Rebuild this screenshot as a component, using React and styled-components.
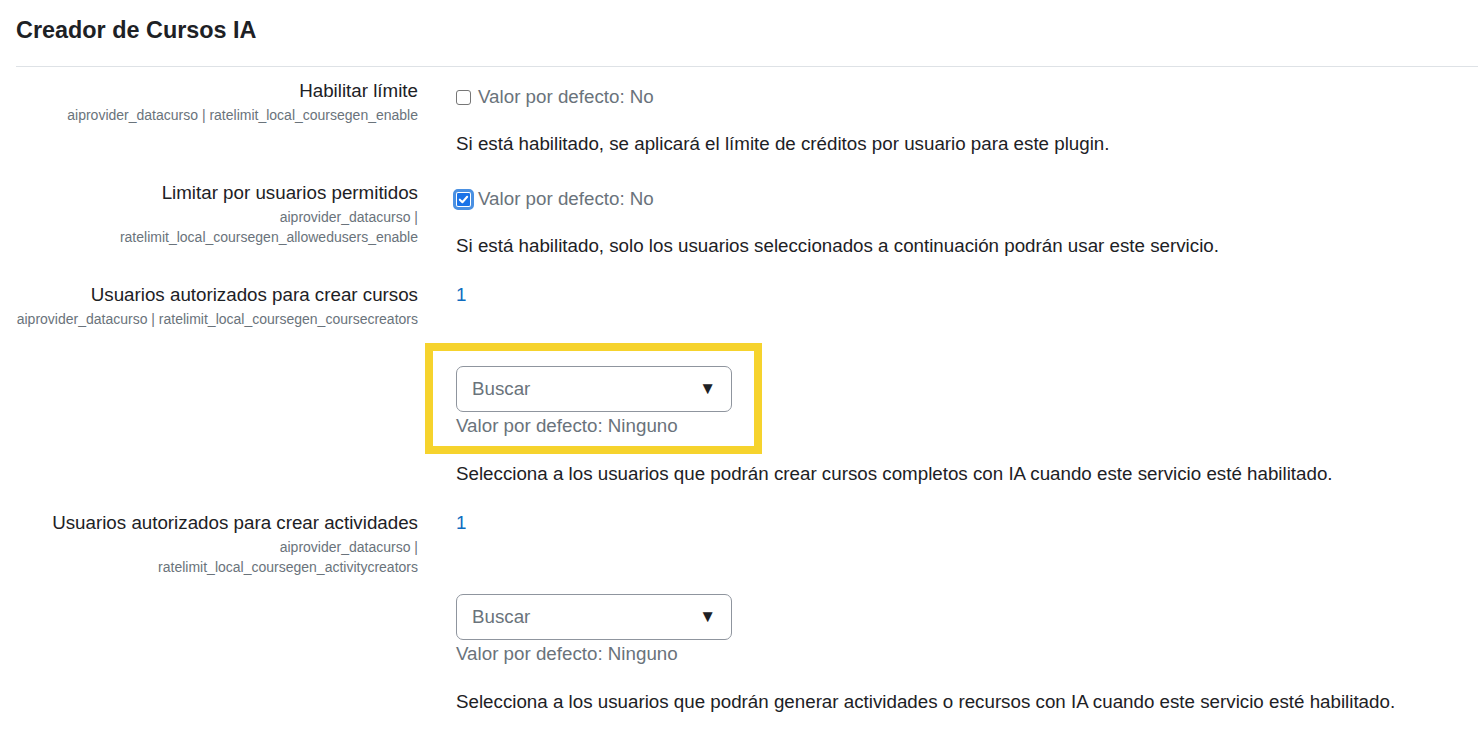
import React from 'react'
import styled, { createGlobalStyle, css } from 'styled-components'

const GlobalStyle = createGlobalStyle`
  html, body {
    margin: 0;
    padding: 0;
    background: #fff;
  }
  body {
    font-family: "Liberation Sans", Arial, sans-serif;
    color: #1d2125;
  }
`

const Page = styled.div`
  padding: 16px 0 0 16px;
`

const Title = styled.h3`
  margin: 0;
  font-size: 23.4px;
  line-height: 28px;
  font-weight: 700;
  color: #1d2125;
`

const Divider = styled.hr`
  margin: 22px 0 0 0;
  border: 0;
  border-top: 1px solid #dee2e6;
`

const Settings = styled.div`
  padding-top: 10px;
  display: flex;
  flex-direction: column;
  gap: 21px;
`

const Row = styled.div`
  display: grid;
  grid-template-columns: 402px 1fr;
  column-gap: 38px;
`

const LabelCol = styled.div`
  text-align: right;
`

const LabelTitle = styled.div`
  font-size: 18.75px;
  line-height: 28px;
  color: #1d2125;
`

const SettingName = styled.div`
  font-size: 14px;
  line-height: 20px;
  color: #6a737b;
  white-space: nowrap;
  &:first-of-type {
    margin-top: 1px;
  }
`

const ContentCol = styled.div`
  display: flex;
  flex-direction: column;
`

const CheckLine = styled.div`
  display: flex;
  align-items: center;
  padding-top: 6px;
  height: 28px;
  margin-bottom: -1px;
  font-size: 18.75px;
  color: #6a737b;
`

const Box = styled.span`
  box-sizing: border-box;
  width: 15px;
  height: 15px;
  margin-right: 7px;
  border: 1px solid #767676;
  border-radius: 3px;
  background: #fff;
  display: inline-flex;
  align-items: center;
  justify-content: center;
  ${p => p.checked && css`
    background: #1a73e8;
    border: 1px solid #fff;
    outline: 3px solid #4a90e2;
    border-radius: 2px;
  `}
`

const Description = styled.div`
  margin-top: ${p => p.gap || 20}px;
  font-size: 18.75px;
  line-height: 28px;
  color: #1d2125;
`

const Count = styled.div`
  font-size: 18.75px;
  line-height: 28px;
  color: #0f6cbf;
`

const SelectBlock = styled.div`
  position: relative;
  margin-top: 57px;
  width: 276px;
  ${p => p.highlight && css`
    &::before {
      content: '';
      position: absolute;
      left: -31px;
      top: -23px;
      width: 337px;
      height: 111px;
      box-sizing: border-box;
      border: 8px solid #f6d32d;
      pointer-events: none;
    }
  `}
`

const Select = styled.div`
  box-sizing: border-box;
  width: 276px;
  height: 46px;
  border: 1px solid #8f959e;
  border-radius: 7px;
  padding: 0 15px;
  display: flex;
  align-items: center;
  justify-content: space-between;
  font-size: 18.75px;
  color: #6a737b;
  background: #fff;
`

const Arrow = styled.span`
  font-size: 17px;
  color: #1d2125;
`

const DefaultText = styled.div`
  font-size: 18.75px;
  line-height: 28px;
  color: #6a737b;
`

function Label({ title, names }) {
  return (
    <LabelCol>
      <LabelTitle>{title}</LabelTitle>
      {names.map((n, i) => (
        <SettingName key={i}>{n}</SettingName>
      ))}
    </LabelCol>
  )
}

function Check({ checked }) {
  return (
    <Box checked={checked}>
      {checked && (
        <svg width="11" height="11" viewBox="0 0 12 12">
          <path d="M2 6.2 L4.8 9 L10 3" fill="none" stroke="#fff" strokeWidth="2.2" strokeLinecap="round" strokeLinejoin="round" />
        </svg>
      )}
    </Box>
  )
}

export default function App() {
  return (
    <>
      <GlobalStyle />
      <Page>
        <Title>Creador de Cursos IA</Title>
        <Divider />
        <Settings>
          <Row>
            <Label title="Habilitar límite" names={['aiprovider_datacurso | ratelimit_local_coursegen_enable']} />
            <ContentCol>
              <CheckLine><Check />Valor por defecto: No</CheckLine>
              <Description>Si está habilitado, se aplicará el límite de créditos por usuario para este plugin.</Description>
            </ContentCol>
          </Row>
          <Row>
            <Label title="Limitar por usuarios permitidos" names={['aiprovider_datacurso |', 'ratelimit_local_coursegen_allowedusers_enable']} />
            <ContentCol>
              <CheckLine><Check checked />Valor por defecto: No</CheckLine>
              <Description>Si está habilitado, solo los usuarios seleccionados a continuación podrán usar este servicio.</Description>
            </ContentCol>
          </Row>
          <Row>
            <Label title="Usuarios autorizados para crear cursos" names={['aiprovider_datacurso | ratelimit_local_coursegen_coursecreators']} />
            <ContentCol>
              <Count>1</Count>
              <SelectBlock highlight>
                <Select>Buscar<Arrow>▼</Arrow></Select>
                <DefaultText>Valor por defecto: Ninguno</DefaultText>
              </SelectBlock>
              <Description gap={20}>Selecciona a los usuarios que podrán crear cursos completos con IA cuando este servicio esté habilitado.</Description>
            </ContentCol>
          </Row>
          <Row>
            <Label title="Usuarios autorizados para crear actividades" names={['aiprovider_datacurso |', 'ratelimit_local_coursegen_activitycreators']} />
            <ContentCol>
              <Count>1</Count>
              <SelectBlock>
                <Select>Buscar<Arrow>▼</Arrow></Select>
                <DefaultText>Valor por defecto: Ninguno</DefaultText>
              </SelectBlock>
              <Description gap={20}>Selecciona a los usuarios que podrán generar actividades o recursos con IA cuando este servicio esté habilitado.</Description>
            </ContentCol>
          </Row>
        </Settings>
      </Page>
    </>
  )
}
